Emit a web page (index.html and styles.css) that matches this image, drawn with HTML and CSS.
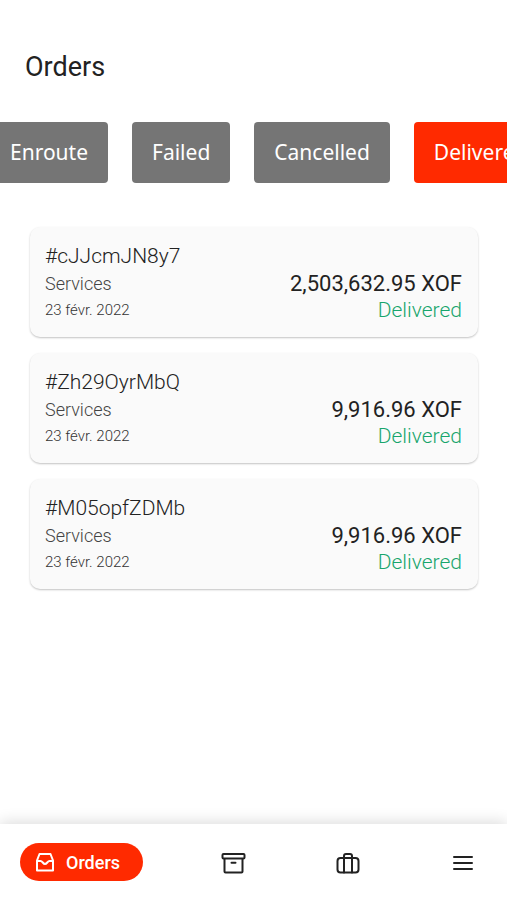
FILE: index.html
```html
<!DOCTYPE html>
<html lang="en">
<head>
<meta charset="utf-8">
<meta name="viewport" content="width=device-width, initial-scale=1">
<title>Orders</title>
<link rel="stylesheet" href="styles.css">
</head>
<body>
<main class="content">
  <h1 class="title">Orders</h1>
  <div class="filters">
    <button class="filter" type="button">Enroute</button>
    <button class="filter" type="button">Failed</button>
    <button class="filter" type="button">Cancelled</button>
    <button class="filter filter-active" type="button">Delivered</button>
  </div>
  <section class="orders">
    <article class="order">
      <div class="info">
        <h2 class="order-id">#cJJcmJN8y7</h2>
        <p class="kind">Services</p>
        <p class="date">23 févr. 2022</p>
      </div>
      <div class="summary">
        <p class="amount">2,503,632.95 XOF</p>
        <p class="status">Delivered</p>
      </div>
    </article>
    <article class="order">
      <div class="info">
        <h2 class="order-id">#Zh29OyrMbQ</h2>
        <p class="kind">Services</p>
        <p class="date">23 févr. 2022</p>
      </div>
      <div class="summary">
        <p class="amount">9,916.96 XOF</p>
        <p class="status">Delivered</p>
      </div>
    </article>
    <article class="order">
      <div class="info">
        <h2 class="order-id">#M05opfZDMb</h2>
        <p class="kind">Services</p>
        <p class="date">23 févr. 2022</p>
      </div>
      <div class="summary">
        <p class="amount">9,916.96 XOF</p>
        <p class="status">Delivered</p>
      </div>
    </article>
  </section>
</main>
<nav class="tabbar">
  <a class="tab tab-active" href="#orders">
    <svg class="pill-icon" viewBox="0 0 20 20" aria-hidden="true"><path d="M4.500 2h11l2.500 6.500V18.500H2V8.500zM2 9h3.500c2 0 2.500 3 4.500 3s2.500-3 4.500-3H18"/></svg>
    <span>Orders</span>
  </a>
  <a class="tab" href="#archive" aria-label="Archive">
    <svg class="icon" viewBox="0 0 26 26" aria-hidden="true"><rect x="2.500" y="5" width="22" height="4.500" rx="1"/><path d="M4.500 10v12.500a1 1 0 0 0 1 1h16a1 1 0 0 0 1-1V10M11.500 13.800h4"/></svg>
  </a>
  <a class="tab" href="#services" aria-label="Services">
    <svg class="icon" viewBox="0 0 26 26" aria-hidden="true"><rect x="2.500" y="9" width="21" height="14.500" rx="3"/><path d="M9 23.500V7a2 2 0 0 1 2-2h4a2 2 0 0 1 2 2v16.500M9 9h8"/></svg>
  </a>
  <a class="tab" href="#menu" aria-label="Menu">
    <svg class="icon" viewBox="0 0 26 26" aria-hidden="true"><path d="M4 8h18M4 14h18M4 20h18"/></svg>
  </a>
</nav>
</body>
</html>
```
FILE: styles.css
```css
* {
  box-sizing: border-box;
}

body {
  margin: 0;
  min-height: 100vh;
  display: flex;
  flex-direction: column;
  background: #fff;
  color: #222;
  font-family: Roboto, "Liberation Sans", sans-serif;
}

h1, h2, p {
  margin: 0;
  font-weight: 400;
}

.content {
  flex: 1;
  padding-top: 48px;
}

.title {
  padding-left: 25px;
  font-size: 27px;
  line-height: 38px;
}

.filters {
  display: flex;
  gap: 24px;
  margin: 36px 0 0 -10px;
  overflow: hidden;
}

.filter {
  flex: none;
  height: 61px;
  padding: 0 20px 2px;
  border: 0;
  border-radius: 4px;
  background: #757575;
  color: #fff;
  font: 400 21px "Noto Sans", sans-serif;
}

.filter-active {
  background: #ff2a00;
}

.orders {
  display: grid;
  gap: 16px;
  padding: 44px 29px 24px 30px;
}

.order {
  display: flex;
  justify-content: space-between;
  align-items: flex-end;
  padding: 15px 16px 14px 15px;
  border-radius: 10px;
  background: #fafafa;
  box-shadow: 0 1px 2px rgba(0, 0, 0, 0.24);
}

.order-id {
  font-size: 21px;
  font-weight: 300;
  line-height: 29px;
}

.kind {
  color: #444;
  font-size: 18px;
  font-weight: 300;
  line-height: 26px;
}

.date {
  color: #333;
  font-size: 15px;
  font-weight: 300;
  line-height: 26px;
}

.summary {
  text-align: right;
}

.amount {
  font-size: 22px;
  line-height: 26px;
}

.status {
  color: #18a56c;
  font-size: 21px;
  font-weight: 300;
  line-height: 26px;
}

.tabbar {
  display: flex;
  justify-content: space-between;
  align-items: center;
  height: 76px;
  padding: 0 19px 0 20px;
  background: #fff;
  box-shadow: 0 -2px 14px rgba(0, 0, 0, 0.14);
}

.tab {
  display: flex;
  justify-content: center;
  align-items: center;
  min-width: 50px;
  height: 38px;
  color: #222;
  text-decoration: none;
}

.tab-active {
  gap: 11px;
  padding: 0 23px 0 15px;
  border-radius: 19px;
  background: #ff2a00;
  color: #fff;
  font-size: 18px;
  font-weight: 500;
}

.icon, .pill-icon {
  fill: none;
  stroke: currentColor;
  stroke-width: 2;
  stroke-linecap: round;
  stroke-linejoin: round;
}

.icon {
  width: 26px;
  height: 26px;
}

.pill-icon {
  width: 20px;
  height: 20px;
}
```
